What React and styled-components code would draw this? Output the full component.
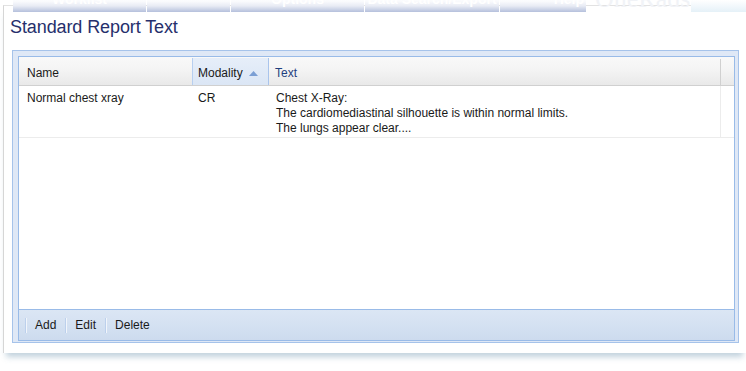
import React from "react";
import styled, { createGlobalStyle } from "styled-components";

const GlobalStyle = createGlobalStyle`
  html, body {
    margin: 0;
    padding: 0;
    background: #ffffff;
    overflow: hidden;
  }
  body {
    font-family: "Liberation Sans", Arial, Helvetica, sans-serif;
  }
`;

const tabs = [
  { label: "Worklist", width: 133 },
  { label: "", width: 83 },
  { label: "Options", width: 133 },
  { label: "Data Search/Export", width: 134 },
  { label: "Help", width: 86, right: true },
];

const columns = [
  { key: "name", label: "Name" },
  { key: "modality", label: "Modality", sorted: true },
  { key: "text", label: "Text", hover: true },
];

const rows = [
  {
    name: "Normal chest xray",
    modality: "CR",
    text: [
      "Chest X-Ray:",
      "The cardiomediastinal silhouette is within normal limits.",
      "The lungs appear clear....",
    ],
  },
];

const App = () => {
  return (
    <Page>
      <GlobalStyle />
      <NavBar>
        <NavSpacer />
        {tabs.map((t, i) => (
          <Tab key={i} $width={t.width} $right={t.right}>
            {t.label}
          </Tab>
        ))}
        <Logo>OneRads</Logo>
        <NavGlow />
      </NavBar>

      <Card>
        <Title>Standard Report Text</Title>
        <Frame>
          <Grid>
            <HeaderRow>
              {columns.map((c) => (
                <HeaderCell key={c.key} $sorted={c.sorted} $hover={c.hover}>
                  {c.label}
                  {c.sorted && (
                    <SortArrow viewBox="0 0 9 5" width="9" height="5">
                      <path d="M0 5 L4.5 0 L9 5 Z" fill="#7b9fd4" />
                    </SortArrow>
                  )}
                </HeaderCell>
              ))}
              <HeaderFiller />
            </HeaderRow>

            <Body>
              {rows.map((r, i) => (
                <DataRow key={i}>
                  <Cell $pad={8}>{r.name}</Cell>
                  <Cell $pad={6}>{r.modality}</Cell>
                  <Cell $pad={7}>
                    {r.text.map((line, j) => (
                      <div key={j}>{line}</div>
                    ))}
                  </Cell>
                  <FillerCell />
                </DataRow>
              ))}
            </Body>

            <Toolbar>
              <ToolButton>Add</ToolButton>
              <ToolButton>Edit</ToolButton>
              <ToolButton>Delete</ToolButton>
            </Toolbar>
          </Grid>
        </Frame>
      </Card>
    </Page>
  );
};

const Page = styled.div`
  width: 746px;
  height: 371px;
  overflow: hidden;
  background: #ffffff;
`;

const NavBar = styled.div`
  display: flex;
  height: 24px;
  margin-top: -12px;
  position: relative;
  z-index: 1;
`;

const NavSpacer = styled.div`
  width: 13px;
`;

const Tab = styled.div`
  width: ${(p) => p.$width}px;
  margin-right: 1px;
  background: linear-gradient(
    to bottom,
    #ffffff 0%,
    #fafbfd 55%,
    #e8ebf4 75%,
    #b5c0dc 100%
  );
  color: #ffffff;
  font-weight: bold;
  font-size: 14px;
  line-height: 14px;
  padding-top: 4px;
  box-sizing: border-box;
  text-align: ${(p) => (p.$right ? "right" : "center")};
  padding-right: ${(p) => (p.$right ? "2px" : "0")};
  white-space: nowrap;
  overflow: hidden;
`;

const Logo = styled.div`
  width: 96px;
  padding-left: 8px;
  overflow: hidden;
  font-family: "Liberation Serif", "Times New Roman", serif;
  font-size: 26px;
  line-height: 26px;
  color: #f1f3f7;
  margin-top: -2px;
  white-space: nowrap;
`;

const NavGlow = styled.div`
  flex: 1;
  background: linear-gradient(
    to bottom,
    #ffffff 50%,
    #e5f1f8 100%
  );
`;

const Card = styled.div`
  margin-left: 3px;
  margin-top: -7px;
  padding: 10px 0 10px 6px;
  border-left: 1px solid #d6d6d6;
  border-top: 1px solid #e2e2e2;
  background: #ffffff;
  box-shadow: 0 7px 6px -3px rgba(120, 155, 180, 0.45);
`;

const Title = styled.h1`
  margin: 0;
  font-size: 18px;
  line-height: 22px;
  font-weight: normal;
  color: #262f6c;
  letter-spacing: -0.1px;
`;

const Frame = styled.div`
  margin-top: 12px;
  margin-left: 2px;
  width: 727px;
  box-sizing: border-box;
  padding: 5px 3px 1px 5px;
  border: 1px solid #a6c3ea;
  background: #dfe8f6;
`;

const Grid = styled.div`
  display: flex;
  flex-direction: column;
  height: 283px;
  border: 1px solid #99bbe8;
  background: #ffffff;
  font-size: 12px;
  color: #1a1a1a;
`;

const HeaderRow = styled.div`
  display: grid;
  grid-template-columns: 173px 77px 451px 1fr;
  height: 29px;
  box-sizing: border-box;
  border-bottom: 1px solid #d0d0d0;
  background: linear-gradient(to bottom, #f9f9f9 0%, #f4f4f4 45%, #e9e9e9 100%);
`;

const HeaderCell = styled.div`
  display: flex;
  align-items: flex-start;
  padding-top: 9px;
  padding-left: ${(p) => (p.$sorted ? 5 : 8)}px;
  line-height: 15px;
  box-sizing: border-box;
  color: ${(p) => (p.$hover ? "#1f3f7e" : "#1a1a1a")};
  ${(p) =>
    p.$sorted &&
    `
    background: linear-gradient(to bottom, #e6eef9 0%, #dbe6f5 100%);
    border-left: 1px solid #b7cff0;
    border-right: 1px solid #a9c4ec;
    margin-top: 1px;
    padding-top: 8px;
  `}
  ${(p) => p.$hover && `padding-left: 6px;`}
`;

const SortArrow = styled.svg`
  margin-left: 6px;
  margin-top: 5px;
`;

const HeaderFiller = styled.div`
  border-left: 1px solid #d0d0d0;
  margin: 2px 0 0 0;
`;

const Body = styled.div`
  flex: 1;
  background: #ffffff;
`;

const DataRow = styled.div`
  display: grid;
  grid-template-columns: 173px 77px 451px 1fr;
  border-bottom: 1px solid #ececec;
`;

const Cell = styled.div`
  padding: 5px 0 1px ${(p) => p.$pad}px;
  line-height: 15px;
  white-space: nowrap;
`;

const FillerCell = styled.div`
  border-left: 1px solid #ececec;
`;

const Toolbar = styled.div`
  display: flex;
  align-items: center;
  height: 30px;
  padding-left: 6px;
  border-top: 1px solid #99bbe8;
  background: linear-gradient(to bottom, #dbe6f4 0%, #d3e0f1 60%, #cddbee 100%);
`;

const ToolButton = styled.div`
  padding: 0 9px 0 9px;
  line-height: 15px;
  color: #1a1a1a;
  border-left: 1px solid #bcd0ec;
  box-shadow: inset 1px 0 0 #f1f5fb;
  height: 15px;
  display: flex;
  align-items: center;
`;

export default App;
